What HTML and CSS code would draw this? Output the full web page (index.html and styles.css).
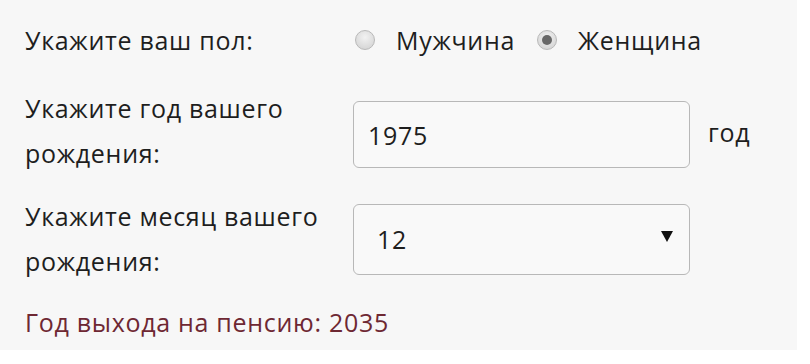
FILE: index.html
```html
<!DOCTYPE html>
<html lang="ru">
<head>
<meta charset="utf-8">
<link rel="stylesheet" href="styles.css">
</head>
<body>
<div class="panel">
  <div class="row row-gender">
    <div class="label">Укажите ваш пол:</div>
    <div class="radios">
      <label class="radio"><span class="dot"></span>Мужчина</label>
      <label class="radio"><span class="dot checked"></span>Женщина</label>
    </div>
  </div>

  <div class="row row-year">
    <div class="label">Укажите год вашего<br>рождения:</div>
    <div class="field input">1975</div>
    <div class="suffix">год</div>
  </div>

  <div class="row row-month">
    <div class="label">Укажите месяц вашего<br>рождения:</div>
    <div class="field select"><span>12</span><span class="arrow"></span></div>
  </div>

  <div class="result">Год выхода на пенсию: 2035</div>
</div>
</body>
</html>
```
FILE: styles.css
```css
html, body {
  margin: 0;
  background: #ffffff;
}
body {
  font-family: "Open Sans", "Liberation Sans", sans-serif;
  color: #1e1e1e;
  font-size: 25px;
  letter-spacing: 0.7px;
}
.panel {
  width: 772px;
  height: 330px;
  background: #f7f7f7;
  padding: 20px 0 0 25px;
}
.row {
  display: grid;
  grid-template-columns: 310px 337px auto;
  column-gap: 18px;
  align-items: center;
}
.row-gender {
  height: 40px;
}
.row-year {
  height: 90px;
  margin-top: 26px;
}
.row-month {
  height: 90px;
  margin-top: 18px;
}
.label {
  line-height: 45px;
  white-space: nowrap;
}
.row-gender .label {
  line-height: 40px;
}
.radios {
  grid-column: 2 / 4;
  display: flex;
  gap: 22px;
  align-items: center;
  padding-left: 2px;
}
.radio {
  display: flex;
  align-items: center;
  gap: 21px;
}
.dot {
  width: 20px;
  height: 20px;
  border-radius: 50%;
  background: radial-gradient(circle at 50% 35%, #f2f2f2, #cfcfcf);
  border: 1px solid #b9b9b9;
  box-sizing: border-box;
  position: relative;
}
.dot.checked::after {
  content: "";
  position: absolute;
  left: 4px;
  top: 4px;
  width: 10px;
  height: 10px;
  border-radius: 50%;
  background: #686868;
}
.field {
  border: 1px solid #b8b8b8;
  border-radius: 6px;
  background: #f9f9f9;
  box-sizing: border-box;
  display: flex;
  align-items: center;
}
.input {
  height: 67px;
  padding-left: 14px;
  margin-top: 7px;
}
.select {
  height: 71px;
  padding: 0 16px 0 23px;
  justify-content: space-between;
}
.arrow {
  width: 0;
  height: 0;
  border-left: 6px solid transparent;
  border-right: 6px solid transparent;
  border-top: 11px solid #111;
  margin-top: -6px;
}
.suffix {
  margin-top: 2px;
}
.result {
  margin-top: 18px;
  color: #6e2833;
  line-height: 40px;
}
```
